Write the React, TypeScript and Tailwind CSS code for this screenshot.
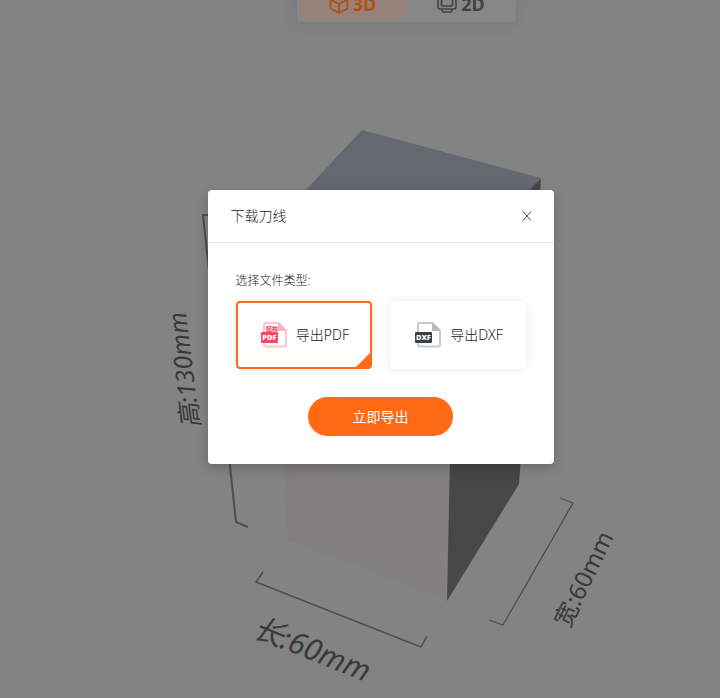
import { useState } from "react";

const cjk = "font-['Noto_Sans','Noto_Sans_CJK_SC',sans-serif]";

function Scene() {
  return (
    <svg
      className="absolute left-0 top-0 h-[698px] w-[720px]"
      viewBox="0 0 720 698"
      role="img"
      aria-label="长:60mm 宽:60mm 高:130mm"
    >
      <defs>
        <linearGradient id="front" x1="0" y1="0" x2="1" y2="1">
          <stop offset="0" stopColor="#7e7d7b" />
          <stop offset="1" stopColor="#838281" />
        </linearGradient>
        <linearGradient id="side" x1="0" y1="0" x2="0" y2="1">
          <stop offset="0" stopColor="#424446" />
          <stop offset="1" stopColor="#484848" />
        </linearGradient>
      </defs>
      <path d="M272 225 458 260 447 601 288 540Z" fill="url(#front)" />
      <path d="M541 178 519 484 447 601 454 260Z" fill="url(#side)" />
      <path d="M362 130 541 178 458 262 273 225Z" fill="#646871" />
      <path d="M541 179 510 211" stroke="#50545b" strokeWidth="1" />
      <g fill="none" stroke="#4e4e4e" strokeLinejoin="round">
        <path d="M211 215 203 215 236 522 248 527" strokeWidth="2" />
        <path d="M263 572 256 582 421 647 427 636" strokeWidth="1.5" />
        <path d="M560 498 573 503 503 625 489 620" strokeWidth="1.3" />
      </g>
      <g fill="#393939" className={cjk}>
        <text transform="translate(200 427) rotate(-97)" fontSize="25" fontStyle="italic">
          高:130mm
        </text>
        <text transform="translate(251 636) rotate(22)" fontSize="30" fontStyle="italic">
          长:60mm
        </text>
        <text transform="translate(569 629) rotate(-64)" fontSize="24">
          宽:60mm
        </text>
      </g>
    </svg>
  );
}

function CubeIcon() {
  return (
    <svg className="size-5" viewBox="0 0 20 20" fill="none" stroke="currentColor" strokeWidth="1.8" strokeLinejoin="round" aria-hidden="true">
      <path d="M10 1 18.5 5.5V14.5L10 19 1.500 14.500V5.500ZM1.500 5.500 10 10 18.500 5.500M10 10V19" />
    </svg>
  );
}

function FlatIcon() {
  return (
    <svg className="size-5" viewBox="0 0 20 20" fill="none" stroke="currentColor" strokeWidth="1.6" strokeLinejoin="round" aria-hidden="true">
      <path d="M4.500 12V2Q4.500 1 5.500 1H14.500Q15.500 1 15.500 2V12M4.500 12H15.500M4.500 15 6 18H14L15.500 15" />
      <rect x="1" y="5" width="18" height="10" rx="2" />
    </svg>
  );
}

function FileIcon({ label, band, page, fold, caption }: { label: string; band: string; page: string; fold: string; caption?: string }) {
  return (
    <svg className="h-[26px] w-[26px] shrink-0" viewBox="0 0 26 26" aria-hidden="true">
      <path d="M3 10V3Q3 1 5 1H17.500L25 8.500V22.500Q25 24.500 23 24.500H5Q3 24.500 3 22.500V21" fill="none" stroke={page} strokeWidth="2" />
      <path d="M17 0 26 9H17Z" fill={fold} />
      {caption && (
        <text x="5" y="8.500" fontSize="6" fontWeight="900" fill={band} className={cjk}>
          {caption}
        </text>
      )}
      <rect y="10" width="17" height="11" rx="1" fill={band} />
      <text x="8.500" y="18.300" textAnchor="middle" fontSize="7.500" fontWeight="900" fill="#fff" className={cjk}>
        {label}
      </text>
    </svg>
  );
}

const types = [
  { id: "PDF", band: "#f64a64", page: "#fdc5cd", fold: "#fbb3be", caption: "结构" },
  { id: "DXF", band: "#3b414b", page: "#c7c9cc", fold: "#b6b9bd", caption: undefined },
];

export default function App() {
  const [type, setType] = useState("PDF");
  return (
    <main className={`relative min-h-screen overflow-hidden bg-[#838383] ${cjk}`}>
      <Scene />
      <div className="relative -mt-4 flex justify-center pl-[93px]">
        <div className="flex rounded-sm bg-[#878787] p-[2px] text-[18px] font-bold leading-6 shadow-[0_0_12px_rgba(80,90,100,0.35)]">
          <button type="button" className="flex h-[34px] w-[107px] items-center justify-center gap-1 rounded-sm bg-[#94827b] pt-[2px] text-[#b34f13]">
            <CubeIcon />
            3D
          </button>
          <button type="button" className="flex h-[34px] w-[108px] items-center justify-center gap-1 pl-[2px] pt-[2px] text-[#424242]">
            <FlatIcon />
            2D
          </button>
        </div>
      </div>

      <div className="absolute inset-0 flex items-start justify-center pl-[41px] pt-[190px]">
        <section
          role="dialog"
          aria-labelledby="dialog-title"
          className="w-[346px] rounded-sm bg-white text-[#222] shadow-[0_4px_12px_rgba(0,0,0,0.2)]"
        >
          <header className="flex h-[53px] items-center justify-between border-b border-[#e3e3e3] pl-[23px] pr-[19px]">
            <h2 id="dialog-title" className="text-[14px] font-light leading-5">下载刀线</h2>
            <button type="button" aria-label="关闭" className="flex size-4 items-center justify-center text-[#555]">
              <svg className="size-3" viewBox="0 0 12 12" fill="none" stroke="currentColor" aria-hidden="true">
                <path d="M2 1.500 10 10.500M10 1.500 2 10.500" />
              </svg>
            </button>
          </header>
          <form className="px-7 pb-7 pt-7" onSubmit={(e) => e.preventDefault()}>
            <fieldset>
              <legend className="text-[12px] font-light leading-5">选择文件类型:</legend>
              <div className="mt-[10px] flex gap-[18px]">
                {types.map((t) => (
                  <label
                    key={t.id}
                    className={`relative flex h-[68px] w-[136px] cursor-pointer items-center justify-center gap-[9px] overflow-hidden rounded border-2 pl-[3px] text-[14px] font-light leading-5 shadow-[0_0_12px_rgba(0,0,0,0.08)] ${type === t.id ? "border-[#ff6a17]" : "border-transparent"}`}
                  >
                    <input
                      type="radio"
                      name="file-type"
                      className="sr-only"
                      checked={type === t.id}
                      onChange={() => setType(t.id)}
                    />
                    <FileIcon label={t.id} band={t.band} page={t.page} fold={t.fold} caption={t.caption} />
                    <span>导出{t.id}</span>
                    {type === t.id && (
                      <span className="absolute bottom-0 right-0 border-[7px] border-b-[#ff6a17] border-l-transparent border-r-[#ff6a17] border-t-transparent" />
                    )}
                  </label>
                ))}
              </div>
            </fieldset>
            <button
              type="submit"
              className="mx-auto mt-7 block h-[39px] w-[145px] rounded-full bg-[#ff6a17] text-[14px] leading-5 text-white"
            >
              立即导出
            </button>
          </form>
        </section>
      </div>
    </main>
  );
}
